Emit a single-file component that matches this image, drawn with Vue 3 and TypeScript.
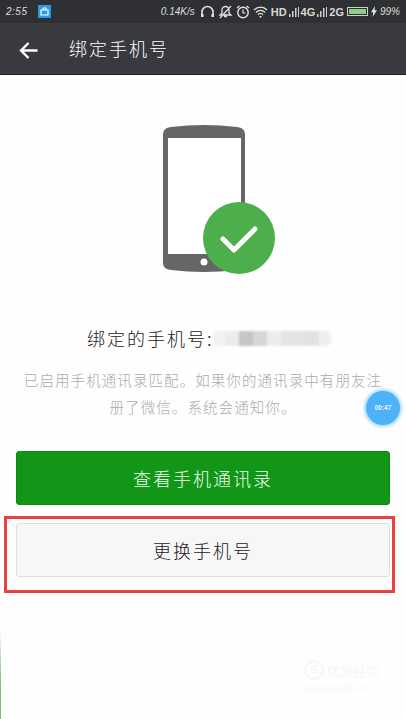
<script setup lang="ts">
const blurCells: { w: number; c: string }[] = [
  { w: 12, c: '#f1f1f1' },
  { w: 14, c: '#ececec' },
  { w: 14, c: '#c6c6c6' },
  { w: 14, c: '#d6d6d6' },
  { w: 14, c: '#ededed' },
  { w: 24, c: '#e4e4e4' },
  { w: 14, c: '#e2e2e2' },
  { w: 12, c: '#efefef' },
]
</script>

<template>
  <div class="screen">
    <div class="statusbar">
      <div class="status-left">
        <span class="time">2:55</span>
        <span class="app-badge">
          <svg width="9" height="9" viewBox="0 0 9 9"><path d="M1 3h7v5H1z" fill="none" stroke="#fff" stroke-width="1.2" /><path d="M3 3V1h3v2" fill="none" stroke="#fff" /></svg>
        </span>
      </div>
      <div class="status-right">
        <span class="speed">0.14K/s</span>
        <svg width="15" height="13" viewBox="0 0 15 13"><path d="M2 11V7a5.5 5.5 0 0 1 11 0v4" fill="none" stroke="#e4e4e4" stroke-width="1.6" /><path d="M1 9h2.5v3H1zM11.500 9H14v3h-2.500z" fill="#e4e4e4" /></svg>
        <svg width="15" height="14" viewBox="0 0 15 14"><path d="M7.500 1.500a3.500 3.500 0 0 1 3.500 3.500v3l2 2H2l2-2V5a3.500 3.500 0 0 1 3.500-3.500zM6 11.500h3M2 13 13 1" fill="none" stroke="#dcdcdc" stroke-width="1.300" /></svg>
        <svg width="14" height="14" viewBox="0 0 14 14"><circle cx="7" cy="7.500" r="5.200" fill="none" stroke="#e4e4e4" stroke-width="1.400" /><path d="M7 4.500V8h2.500M1 3l2.500-2M13 3l-2.500-2" fill="none" stroke="#e4e4e4" stroke-width="1.200" /></svg>
        <svg width="15" height="12" viewBox="0 0 15 12"><path d="M1 4a9 9 0 0 1 13 0M3 6.500a6 6 0 0 1 9 0M5 8.800a3 3 0 0 1 5 0" fill="none" stroke="#e4e4e4" stroke-width="1.200" /><circle cx="7.500" cy="10.700" r="1" fill="#e4e4e4" /></svg>
        <span class="net">HD</span>
        <svg class="bars" width="10" height="10" viewBox="0 0 10 10"><path d="M0 7h1.500v3H0zM3 4h1.500v6H3zM6 1h1.500v9H6zM9 0h1v10H9z" fill="#cfcfcf" /></svg>
        <span class="net">4G</span>
        <svg class="bars" width="10" height="10" viewBox="0 0 10 10"><path d="M0 7h1.500v3H0zM3 4h1.500v6H3zM6 1h1.500v9H6zM9 0h1v10H9z" fill="#cfcfcf" /></svg>
        <span class="net">2G</span>
        <span class="battery"><span class="battery-fill"></span></span>
        <svg width="6" height="11" viewBox="0 0 6 11"><path d="M4 0 0 6.300h2.300L1.500 11 6 4.300H3.500z" fill="#e4e4e4" /></svg>
        <span class="percent">99%</span>
      </div>
    </div>

    <header class="toolbar">
      <svg class="back" width="19" height="17" viewBox="0 0 19 17">
        <path d="M18.500 8.500H3M9.500 1 2 8.500 9.500 16" fill="none" stroke="#fff" stroke-width="2.400" />
      </svg>
      <span class="title">绑定手机号</span>
    </header>

    <main class="content">
      <div class="illustration">
        <svg width="112" height="150" viewBox="0 0 112 150">
          <path d="M0 10Q0 4 8 3Q41 -1 74 3Q82 4 82 10V139Q82 145 74 146Q41 150 8 146Q0 145 0 139Z" fill="#666666" />
          <rect x="5" y="14" width="73" height="116" fill="#ffffff" />
          <circle cx="41" cy="138" r="3.500" fill="#ffffff" />
          <circle cx="76" cy="114" r="36" fill="#4caf4c" />
          <path d="M60 115 71 126 92 105" fill="none" stroke="#ffffff" stroke-width="5" stroke-linecap="round" stroke-linejoin="round" />
        </svg>
      </div>

      <div class="phone-line">
        <span class="phone-label">绑定的手机号:</span>
        <span class="phone-mask">
          <span
            v-for="(cell, i) in blurCells"
            :key="i"
            class="mask-cell"
            :style="{ width: cell.w + 'px', background: cell.c }"
          ></span>
        </span>
      </div>

      <p class="desc">已启用手机通讯录匹配。如果你的通讯录中有朋友注<br />册了微信。系统会通知你。</p>

      <button class="btn btn-primary" type="button">查看手机通讯录</button>

      <div class="highlight">
        <button class="btn btn-default" type="button">更换手机号</button>
      </div>
    </main>

    <div class="float-ball">00:47</div>

    <div class="watermark">
      <span class="wm-logo">S</span>
      <span class="wm-text">
        <span class="wm-title">优质经验</span>
        <small class="wm-sub">shangyexinzhi.com</small>
      </span>
    </div>
    <div class="edge-glow"></div>
  </div>
</template>

<style>
html, body { margin: 0; padding: 0; background: #fff; }
</style>

<style scoped>
.screen {
  position: relative;
  width: 406px;
  height: 719px;
  overflow: hidden;
  background: #fefefe;
  font-family: "Noto Sans CJK SC", "Noto Sans", sans-serif;
}
.statusbar {
  height: 23px;
  background: #2f3033;
  color: #dedede;
  display: flex;
  align-items: center;
  justify-content: space-between;
  padding: 0 6px 0 6px;
  box-sizing: border-box;
}
.status-left { display: flex; align-items: center; gap: 6px; }
.time { font: italic 10px "Liberation Sans", sans-serif; width: 26px; letter-spacing: .5px; }
.app-badge {
  width: 13px; height: 13px; background: #2a9be8;
  display: flex; align-items: center; justify-content: center;
}
.status-right { display: flex; align-items: center; gap: 3px; }
.speed { font: italic 10px "Liberation Sans", sans-serif; margin-right: 2px; }
.net { font: 700 11px "Liberation Sans", sans-serif; color: #d8d8d8; }
.bars { margin: 0 -1px; }
.battery {
  width: 21px; height: 9px; border: 1px solid #cfcfcf;
  display: flex; padding: 1px; box-sizing: border-box;
}
.battery-fill { flex: 1; background: #8fce85; }
.percent { font: italic 10px "Liberation Sans", sans-serif; }
.toolbar {
  height: 52px;
  background: #393a3f;
  border-bottom: 1px solid #1e1e20;
  box-sizing: border-box;
  display: flex;
  align-items: center;
  padding: 0 0 2px 19px;
}
.back { margin-top: 5px; }
.title {
  margin-left: 31px;
  color: #fff;
  font-size: 18px;
  font-weight: 300;
  letter-spacing: 2px;
}
.content {
  display: flex;
  flex-direction: column;
  align-items: center;
}
.illustration {
  width: 100%;
  height: 246px;
  padding: 49px 0 0 163px;
  box-sizing: border-box;
}
.illustration svg { display: block; }
.phone-line {
  width: 100%;
  height: 20px;
  margin-top: 7px;
  padding-left: 87px;
  box-sizing: border-box;
  display: flex;
  align-items: center;
}
.phone-label {
  width: 126px;
  font-size: 18px;
  font-weight: 300;
  line-height: 20px;
  letter-spacing: 2px;
  color: #1a1a1a;
  white-space: nowrap;
}
.phone-mask {
  display: flex;
  height: 15px;
  border-radius: 5px;
  overflow: hidden;
  filter: blur(1px);
}
.mask-cell { display: block; height: 100%; }
.desc {
  margin: 18px 0 0;
  width: 100%;
  text-align: center;
  font-size: 14.500px;
  font-weight: 300;
  line-height: 27px;
  letter-spacing: 1.080px;
  color: #aaaaaa;
}
.btn {
  display: block;
  width: 374px;
  height: 54px;
  border-radius: 3px;
  font-family: inherit;
  font-size: 18px;
  font-weight: 300;
  letter-spacing: 2px;
  padding: 0;
}
.btn-primary {
  margin-top: 31px;
  background: #119617;
  border: 1px solid #0f8a14;
  color: #f2fff0;
}
.highlight {
  margin-top: 11px;
  width: 391px;
  height: 77px;
  margin-left: -7px;
  border: 3px solid #e8413f;
  box-sizing: border-box;
  padding: 4px 0 0 9px;
}
.btn-default {
  background: #f7f7f7;
  border: 1px solid #dedede;
  color: #1a1a1a;
}
.float-ball {
  position: absolute;
  left: 366px;
  top: 391px;
  width: 34px;
  height: 34px;
  border-radius: 50%;
  background: #4db2f7;
  box-shadow: 0 0 3px 2px #a9dafc;
  color: #e8f6ff;
  font: 700 6.500px/34px "Liberation Sans", sans-serif;
  text-align: center;
}
.watermark {
  position: absolute;
  left: 304px;
  top: 660px;
  display: flex;
  align-items: flex-start;
  gap: 3px;
  opacity: .13;
  color: #bdbdbd;
}
.wm-logo {
  width: 20px; height: 20px; border-radius: 50%;
  border: 2px solid #bdbdbd;
  box-sizing: border-box;
  font: 700 13px/16px "Liberation Sans", sans-serif;
  text-align: center;
}
.wm-text { display: flex; flex-direction: column; gap: 5px; margin-left: -24px; padding-top: 3px; }
.wm-title { display: block; margin-left: 24px; font-size: 13px; line-height: 15px; }
.wm-sub { display: block; font-size: 7.500px; line-height: 9px; white-space: nowrap; }
.edge-glow {
  position: absolute;
  left: 0;
  top: 630px;
  bottom: 0;
  width: 1px;
  background: linear-gradient(#ffffff, #7fbf7f 60%, #7fbf7f);
}
</style>
